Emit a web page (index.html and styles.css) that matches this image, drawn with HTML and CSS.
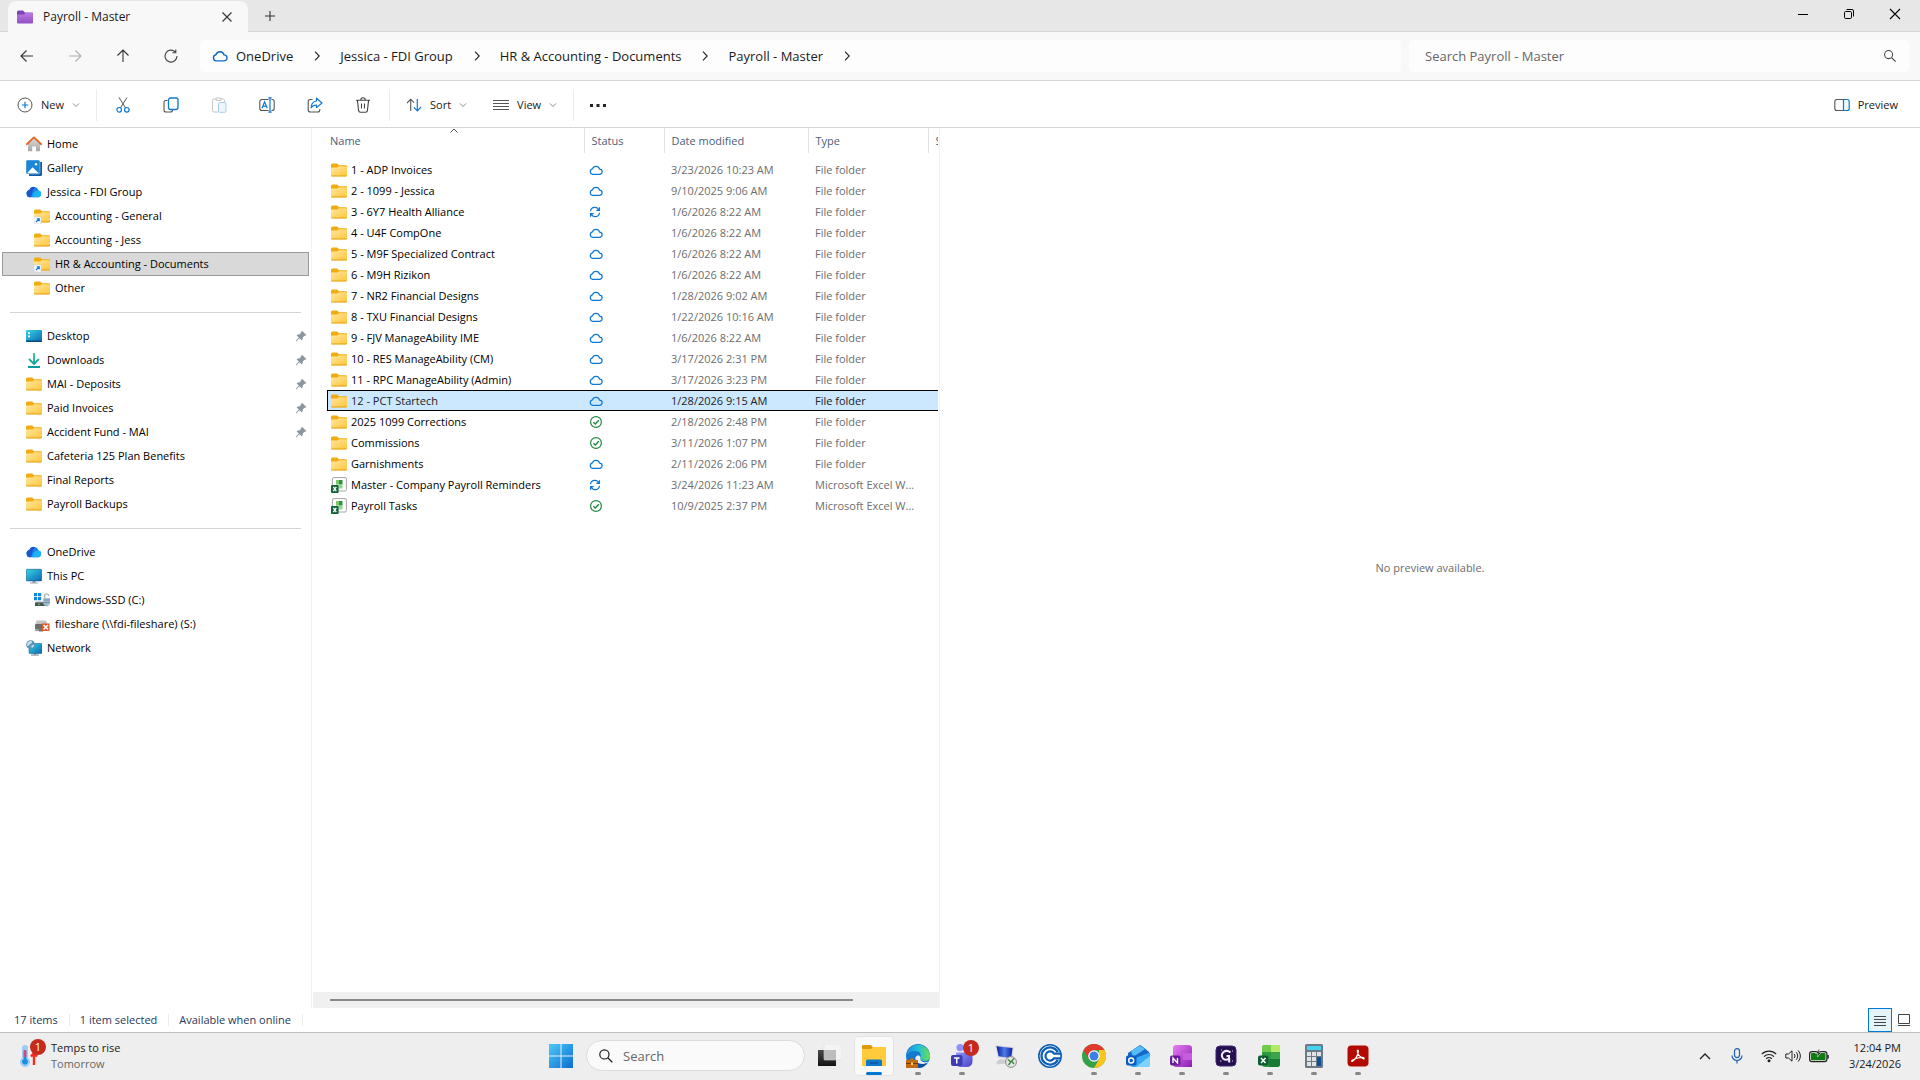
FILE: index.html
```html
<!DOCTYPE html>
<html lang="en">
<head>
<meta charset="utf-8">
<title>Payroll - Master</title>
<link rel="stylesheet" href="styles.css">
</head>
<body>
<svg class="sprite" aria-hidden="true">
  <defs>
    <linearGradient id="gFolder" x1="0" y1="0" x2="1" y2="1"><stop offset="0" stop-color="#ffe7a2"/><stop offset="1" stop-color="#ffc63a"/></linearGradient>
    <linearGradient id="gPurple" x1="0" y1="0" x2="0" y2="1"><stop offset="0" stop-color="#b97be0"/><stop offset="1" stop-color="#8f4fc4"/></linearGradient>
    <linearGradient id="gScreen" x1="0" y1="0" x2="1" y2="1"><stop offset="0" stop-color="#35d6e3"/><stop offset="1" stop-color="#0b66b5"/></linearGradient>
    <linearGradient id="gBlue" x1="0" y1="0" x2="1" y2="1"><stop offset="0" stop-color="#4cc8fb"/><stop offset="1" stop-color="#0a6ecf"/></linearGradient>
    <linearGradient id="gHouse" x1="0" y1="0" x2="0" y2="1"><stop offset="0" stop-color="#dcdcdc"/><stop offset="1" stop-color="#a4a4a4"/></linearGradient>
    <linearGradient id="gDown" x1="0" y1="0" x2="0" y2="1"><stop offset="0" stop-color="#2fc08f"/><stop offset="1" stop-color="#0c9aa0"/></linearGradient>
    <linearGradient id="gEdge" x1="0" y1="0" x2="1" y2="0"><stop offset="0" stop-color="#1b8fe0"/><stop offset=".5" stop-color="#22bfd6"/><stop offset="1" stop-color="#6be04f"/></linearGradient>
    <linearGradient id="gTeams" x1="0" y1="0" x2="1" y2="1"><stop offset="0" stop-color="#8f95ff"/><stop offset="1" stop-color="#4a45c4"/></linearGradient>
    <linearGradient id="gNote" x1="0" y1="0" x2="1" y2="1"><stop offset="0" stop-color="#e87ef5"/><stop offset="1" stop-color="#8a1fb0"/></linearGradient>
    <linearGradient id="gDark" x1="0" y1="0" x2="0" y2="1"><stop offset="0" stop-color="#4a4a4a"/><stop offset="1" stop-color="#141414"/></linearGradient>
    <linearGradient id="gRdp" x1="0" y1="0" x2="1" y2="0"><stop offset="0" stop-color="#0a1f9c"/><stop offset=".5" stop-color="#4f7ae8"/><stop offset="1" stop-color="#0c22a0"/></linearGradient>
  </defs>
  <symbol id="folder" viewBox="0 0 16 16"><path d="M0 3.2Q0 1.5 1.5 1.5H6.2L8 3.3H15Q16 3.3 16 4.3V6H0Z" fill="#f2ab0c"/><path d="M0 5.6H6.2L8 4.2H15.2Q16 4.2 16 5V13.2Q16 14.2 15 14.2H1Q0 14.2 0 13.2Z" fill="url(#gFolder)"/><path d="M0 13.5H16Q16 14.5 15 14.5H1Q0 14.5 0 13.5Z" fill="#e5a00d"/></symbol>
  <symbol id="folder-link" viewBox="0 0 16 16"><use href="#folder"/><path d="M0 9H7V16H0Z" fill="#fff" stroke="#c9d3dc" stroke-width=".7"/><path d="M2 14L5 11M2.8 10.8H5.2V13.2" fill="none" stroke="#1277cf" stroke-width="1.3"/></symbol>
  <symbol id="folder-purple" viewBox="0 0 16 16"><path d="M0 3Q0 1.5 1.5 1.5H6L8 3.5H15Q16 3.5 16 4.5V7H0Z" fill="#7b46b4"/><path d="M0 5.5H7L8.5 4H15Q16 4 16 5V13.5Q16 14.5 15 14.5H1Q0 14.5 0 13.5Z" fill="url(#gPurple)"/></symbol>
  <symbol id="home" viewBox="0 0 16 16"><path d="M2 7.5L8 2.2L14 7.5V14.5Q14 15.3 13.2 15.3H10V10.4H6.2V15.3H2.8Q2 15.3 2 14.5Z" fill="url(#gHouse)"/><path d="M.8 8.2L8 1.4L15.2 8.2" fill="none" stroke="#e0682a" stroke-width="1.9" stroke-linecap="round" stroke-linejoin="round"/></symbol>
  <symbol id="gallery" viewBox="0 0 16 16"><path d="M2 2H16V14.5Q16 16 14.5 16H3Z" fill="#1159a3"/><rect width="14" height="14" rx="1.5" fill="#1a86d6" stroke="#fff" stroke-width=".4"/><path d="M1 13.2L6.6 7.2L12.8 13.2Z" fill="#fff"/><circle cx="10" cy="4.2" r="1.2" fill="#fff"/></symbol>
  <symbol id="onedrive" viewBox="0 0 16 16"><path d="M4 13.3A3.8 3.8 0 0 1 3.2 5.9A5 5 0 0 1 12.4 6.2A3.7 3.7 0 0 1 12.6 13.3Z" fill="#1583ee"/><path d="M3.2 5.9A5 5 0 0 1 9.3 3.2Q6 6 5.2 12.9L4 13.3A3.8 3.8 0 0 1 3.2 5.9Z" fill="#1c55cd"/><path d="M6.3 13.3Q6.8 6.9 12.4 6.2A3.7 3.7 0 0 1 12.6 13.3Z" fill="#18b3fb"/></symbol>
  <symbol id="desktop" viewBox="0 0 16 16"><rect y="2" width="16" height="12" rx="1" fill="url(#gScreen)"/><path d="M0 12.4H16V13Q16 14 15 14H1Q0 14 0 13Z" fill="#084a7d"/><path d="M2 4.2H4V6H2ZM2 7.4H4V9.2H2Z" fill="#fff"/></symbol>
  <symbol id="downloads" viewBox="0 0 16 16"><path d="M8 1V11.5M3 7L8 12L13 7M2 15H14" fill="none" stroke="url(#gDown)" stroke-width="1.8"/></symbol>
  <symbol id="pc" viewBox="0 0 16 16"><path d="M6.5 12.5H9.5V14.4H12V15.6H4V14.4H6.5Z" fill="#9aa5ad"/><rect x=".3" y="1.3" width="15.4" height="11.6" rx="1" fill="url(#gScreen)" stroke="#0c5586" stroke-width=".6"/></symbol>
  <symbol id="ssd" viewBox="0 0 16 16"><path d="M0 1H3.2V4.2H0ZM4 1H7.2V4.2H4ZM0 5H3.2V8.2H0ZM4 5H7.2V8.2H4Z" fill="#1285dc"/><path d="M2 9.5H10L12 14H1Z" fill="#aeb4b8"/><rect x="1" y="10.5" width="11" height="3.5" fill="#4e5357"/><circle cx="5" cy="12.3" r=".9" fill="#42d35a"/><path d="M10.6 6V4A2.1 2.1 0 0 1 14.8 4" fill="none" stroke="#aab4bc" stroke-width="1.3"/><path d="M9.3 6H16V12.3L12.7 14.8L9.3 12.3Z" fill="#a2bccd"/><path d="M9.3 8H16M9.3 10.5H16" stroke="#648ba5" stroke-width=".8"/></symbol>
  <symbol id="netdrive" viewBox="0 0 16 16"><path d="M2.6 4.5H12L14 9H1Z" fill="#c2c2c2"/><rect x="1" y="8" width="13" height="5.5" rx="1" fill="#6d6d6d"/><path d="M5 13.5H9V15H5ZM1 14.2H14" fill="#555" stroke="#777" stroke-width="1"/><rect x="8" y="7.5" width="7.5" height="7.5" fill="#dc5a2b"/><path d="M9.6 9.1L14 13.4M14 9.1L9.6 13.4" stroke="#fff" stroke-width="1.4"/></symbol>
  <symbol id="network" viewBox="0 0 16 16"><path d="M7.5 13H10.5V14.6H13V15.8H5V14.6H7.5Z" fill="#9aa5ad"/><rect x="3" y="3.5" width="13" height="10" rx="1" fill="url(#gScreen)" stroke="#0c5586" stroke-width=".5"/><circle cx="4.6" cy="4.6" r="4.4" fill="#5b93b5"/><path d="M1.2 3Q4 0 6 1.6Q6.5 3.5 3.6 4.2Q2.6 6.6 1.2 5.8ZM5.4 5.4L8.2 4.6Q8 7.2 5.6 8Z" fill="#cfe0ea"/></symbol>
  <symbol id="pin" viewBox="0 0 12 12"><path d="M7 .8L11.3 5L10 5.9L9.5 5.7L7.6 7.7L7.7 9.3L6.6 10.3L4.4 8.2L1.2 11.4L.7 10.9L3.8 7.6L1.7 5.4L2.7 4.4L4.4 4.5L6.3 2.6L6.1 1.9Z" fill="#8b959e"/></symbol>
  <symbol id="cloud" viewBox="0 0 16 16"><path d="M4.2 12.9A3.1 3.1 0 0 1 3.9 6.8A4.2 4.2 0 0 1 12 6.9A3 3 0 0 1 12 12.9Z" fill="none" stroke="currentColor" stroke-width="1.4" stroke-linejoin="round"/></symbol>
  <symbol id="sync" viewBox="0 0 14 14"><path d="M1.8 6.2A5 5 0 0 1 11.4 4.6M12.2 1.6V5.2H8.6M12.2 7.8A5 5 0 0 1 2.6 9.4M1.8 12.4V8.8H5.4" fill="none" stroke="currentColor" stroke-width="1.4"/></symbol>
  <symbol id="check" viewBox="0 0 14 14"><circle cx="7" cy="7" r="5.4" fill="none" stroke="currentColor" stroke-width="1.2"/><path d="M4.4 7.2L6.3 9L9.8 5.2" fill="none" stroke="currentColor" stroke-width="1.4"/></symbol>
  <symbol id="xlfile" viewBox="0 0 16 16"><path d="M3 .6H14Q15.4 .6 15.4 2V12.6Q15.4 14 14 14H3Q1.400 14 1.400 12.600V2Q1.400 .6 3 .6Z" fill="#fff" stroke="#9b9b9b" stroke-width=".9"/><path d="M5 3H8V7.600H5Z" fill="#7dc96a"/><path d="M8 3H11.500V7.600H8Z" fill="#2f9144"/><path d="M7.500 7.600H11.500V11.500H7.500Z" fill="#8fd98a"/><rect y="8" width="7.600" height="8" rx="1" fill="#136238"/><path d="M2.300 9.800L5.300 14.200M5.300 9.800L2.300 14.200" stroke="#fff" stroke-width="1.3"/></symbol>
  <symbol id="chev-right" viewBox="0 0 12 12"><path d="M4 1.6L8.2 6L4 10.4" fill="none" stroke="currentColor" stroke-width="1.1"/></symbol>
  <symbol id="chev-down" viewBox="0 0 8 8"><path d="M1 2.5L4 5.5L7 2.5" fill="none" stroke="#8a8a8a" stroke-width="1"/></symbol>
  <symbol id="search" viewBox="0 0 16 16"><circle cx="6.4" cy="6.4" r="4.6" fill="none" stroke="currentColor" stroke-width="1.2"/><path d="M9.8 9.8L14.4 14.4" stroke="currentColor" stroke-width="1.3"/></symbol>
</svg>

<header class="titlebar">
  <div class="tab">
    <svg class="i16"><use href="#folder-purple"/></svg>
    <span class="tab-name">Payroll - Master</span>
    <button class="icon-btn tab-close" aria-label="Close tab"><svg class="i16" viewBox="0 0 16 16"><path d="M3.5 3.5L12.5 12.5M12.5 3.5L3.5 12.5" stroke="#333" stroke-width="1.1"/></svg></button>
  </div>
  <button class="icon-btn new-tab" aria-label="New tab"><svg class="i16" viewBox="0 0 16 16"><path d="M8 3V13M3 8H13" stroke="#333" stroke-width="1.1"/></svg></button>
  <div class="window-controls">
    <button class="icon-btn" aria-label="Minimize"><svg class="i16" viewBox="0 0 16 16"><path d="M3 8.5H13" stroke="#000"/></svg></button>
    <button class="icon-btn" aria-label="Restore"><svg class="i16" viewBox="0 0 16 16"><rect x="3.5" y="5.5" width="7" height="7" rx="1.2" fill="none" stroke="#000"/><path d="M5.5 3.5H11Q12.5 3.5 12.5 5V10.5" fill="none" stroke="#000"/></svg></button>
    <button class="icon-btn" aria-label="Close"><svg class="i16" viewBox="0 0 16 16"><path d="M3 3L13 13M13 3L3 13" stroke="#000" stroke-width="1.1"/></svg></button>
  </div>
</header>

<div class="navbar">
  <div class="nav-buttons">
    <button class="icon-btn" aria-label="Back"><svg class="i16" viewBox="0 0 16 16"><path d="M2 8H14M7.5 2.5L2 8L7.5 13.5" fill="none" stroke="#333" stroke-width="1.1"/></svg></button>
    <button class="icon-btn" aria-label="Forward" disabled><svg class="i16" viewBox="0 0 16 16"><path d="M2 8H14M8.5 2.5L14 8L8.5 13.5" fill="none" stroke="#b0b0b0" stroke-width="1.1"/></svg></button>
    <button class="icon-btn" aria-label="Up"><svg class="i16" viewBox="0 0 16 16"><path d="M8 14V2M2.5 7.5L8 2L13.5 7.5" fill="none" stroke="#333" stroke-width="1.1"/></svg></button>
    <button class="icon-btn" aria-label="Refresh"><svg class="i16" viewBox="0 0 16 16"><path d="M12.2 3.8A6 6 0 1 0 14 8M12.8 1.6V4.8H9.4" fill="none" stroke="#444" stroke-width="1.1"/></svg></button>
  </div>
  <nav class="address" aria-label="Address">
    <svg class="i16 address-cloud"><use href="#cloud"/></svg>
    <a href="#">OneDrive</a><svg class="i12"><use href="#chev-right"/></svg>
    <a href="#">Jessica - FDI Group</a><svg class="i12"><use href="#chev-right"/></svg>
    <a href="#">HR &amp; Accounting - Documents</a><svg class="i12"><use href="#chev-right"/></svg>
    <a href="#">Payroll - Master</a><svg class="i12"><use href="#chev-right"/></svg>
  </nav>
  <label class="find">
    <input type="text" placeholder="Search Payroll - Master" aria-label="Search Payroll - Master">
    <svg class="i14"><use href="#search"/></svg>
  </label>
</div>

<div class="commands">
  <div class="group">
    <button class="cmd"><svg class="i16" viewBox="0 0 16 16"><circle cx="8" cy="8" r="7" fill="none" stroke="#555"/><path d="M8 4.8V11.2M4.8 8H11.2" stroke="#0f78d4" stroke-width="1.2"/></svg>New<svg class="i8"><use href="#chev-down"/></svg></button>
  </div>
  <div class="group tools">
    <button class="icon-btn" aria-label="Cut"><svg class="i16" viewBox="0 0 16 16"><path d="M4 .5L10.6 11M12 .5L5.4 11" stroke="#555" fill="none"/><circle cx="4.2" cy="12.8" r="2.3" fill="none" stroke="#0f78d4" stroke-width="1.2"/><circle cx="11.8" cy="12.8" r="2.3" fill="none" stroke="#0f78d4" stroke-width="1.2"/></svg></button>
    <button class="icon-btn" aria-label="Copy"><svg class="i16" viewBox="0 0 16 16"><path d="M4.5 3.5H3Q1 3.5 1 5.5V13Q1 15 3 15H7.5Q9.5 15 9.5 13" fill="none" stroke="#555" stroke-width="1.1"/><rect x="5.5" y="1" width="9.5" height="11.5" rx="2" fill="#fff" stroke="#0f78d4" stroke-width="1.3"/></svg></button>
    <button class="icon-btn" aria-label="Paste" disabled><svg class="i16" viewBox="0 0 16 16"><path d="M5 2H3Q1.5 2 1.5 3.5V13.5Q1.5 15 3 15H7M10 2H12Q13.5 2 13.5 3.5V5M5 1H10V3.4H5Z" fill="none" stroke="#c4c4c4"/><rect x="7.5" y="5.5" width="7.5" height="9.8" rx="1.2" fill="#eef6fc" stroke="#a5cdee"/></svg></button>
    <button class="icon-btn" aria-label="Rename"><svg class="i16" viewBox="0 0 16 16"><path d="M9.5 2.5H3Q.8 2.5 .8 4.5V11.5Q.8 13.5 3 13.5H9.5M12.5 2.5H13.2Q15.2 2.5 15.2 4.5V11.5Q15.2 13.5 13.2 13.5H12.5" fill="none" stroke="#555" stroke-width="1.1"/><path d="M3 11.2L5.6 4.8L8.2 11.2M3.9 9.2H7.3M11 .8V15.2M9.3 .8H12.7M9.3 15.2H12.7" fill="none" stroke="#0f78d4" stroke-width="1.2"/></svg></button>
    <button class="icon-btn" aria-label="Share"><svg class="i16" viewBox="0 0 16 16"><path d="M5.5 2.5H3.5Q1.2 2.5 1.2 4.5V13Q1.2 15 3.5 15H10.5Q12.8 15 12.8 13V12" fill="none" stroke="#555" stroke-width="1.1"/><path d="M9.5 1.2L15 6L9.5 10.6V8Q6 7.8 4.2 10.8Q4.4 4.6 9.5 4Z" fill="none" stroke="#0f78d4" stroke-width="1.2" stroke-linejoin="round"/></svg></button>
    <button class="icon-btn" aria-label="Delete"><svg class="i16" viewBox="0 0 16 16"><path d="M1 3.2H15M5.8 3A2.2 2.2 0 0 1 10.2 3M2.4 3.4L3.6 13.6Q3.8 15.2 5.4 15.2H10.6Q12.2 15.2 12.4 13.6L13.6 3.4M6.5 6.5V11.5M9.5 6.5V11.5" fill="none" stroke="#444" stroke-width="1.1"/></svg></button>
  </div>
  <div class="group views">
    <button class="cmd"><svg class="i16" viewBox="0 0 16 16"><path d="M4.7 14V2.2M1 6L4.7 2.2L8 5.6" fill="none" stroke="#555" stroke-width="1.1"/><path d="M11.3 2V13.8M8 10.4L11.3 13.8L15 10" fill="none" stroke="#0f78d4" stroke-width="1.2"/></svg>Sort<svg class="i8"><use href="#chev-down"/></svg></button>
    <button class="cmd"><svg class="i16" viewBox="0 0 16 16"><path d="M0 3.5H16M0 6.5H16M0 9.5H16M0 12.5H16" stroke="#555"/></svg>View<svg class="i8"><use href="#chev-down"/></svg></button>
  </div>
  <button class="icon-btn more" aria-label="See more"><svg class="i16" viewBox="0 0 16 16"><path d="M0 7H3V10H0ZM6.5 7H9.5V10H6.5ZM13 7H16V10H13Z" fill="#222"/></svg></button>
  <button class="cmd preview-toggle"><svg class="i16" viewBox="0 0 16 16"><path d="M9.5 2.5H3Q.8 2.5 .8 4.5V11.5Q.8 13.5 3 13.5H9.5" fill="none" stroke="#555" stroke-width="1.1"/><path d="M9.5 2.5H13.2Q15.2 2.5 15.2 4.5V11.5Q15.2 13.5 13.2 13.5H9.5Z" fill="#f2f9ff" stroke="#0f78d4" stroke-width="1.2"/></svg>Preview</button>
</div>

<main class="panes">
  <nav class="tree" aria-label="Folders">
    <ul>
      <li><a href="#"><svg class="i16"><use href="#home"/></svg>Home</a></li>
      <li><a href="#"><svg class="i16"><use href="#gallery"/></svg>Gallery</a></li>
      <li><a href="#"><svg class="i16"><use href="#onedrive"/></svg>Jessica - FDI Group</a></li>
      <li><a class="sub" href="#"><svg class="i16"><use href="#folder-link"/></svg>Accounting - General</a></li>
      <li><a class="sub" href="#"><svg class="i16"><use href="#folder"/></svg>Accounting - Jess</a></li>
      <li><a class="sub current" href="#"><svg class="i16"><use href="#folder-link"/></svg>HR &amp; Accounting - Documents</a></li>
      <li><a class="sub" href="#"><svg class="i16"><use href="#folder"/></svg>Other</a></li>
    </ul>
    <ul>
      <li><a href="#"><svg class="i16"><use href="#desktop"/></svg>Desktop<svg class="i12 pin"><use href="#pin"/></svg></a></li>
      <li><a href="#"><svg class="i16"><use href="#downloads"/></svg>Downloads<svg class="i12 pin"><use href="#pin"/></svg></a></li>
      <li><a href="#"><svg class="i16"><use href="#folder"/></svg>MAI - Deposits<svg class="i12 pin"><use href="#pin"/></svg></a></li>
      <li><a href="#"><svg class="i16"><use href="#folder"/></svg>Paid Invoices<svg class="i12 pin"><use href="#pin"/></svg></a></li>
      <li><a href="#"><svg class="i16"><use href="#folder"/></svg>Accident Fund - MAI<svg class="i12 pin"><use href="#pin"/></svg></a></li>
      <li><a href="#"><svg class="i16"><use href="#folder"/></svg>Cafeteria 125 Plan Benefits</a></li>
      <li><a href="#"><svg class="i16"><use href="#folder"/></svg>Final Reports</a></li>
      <li><a href="#"><svg class="i16"><use href="#folder"/></svg>Payroll Backups</a></li>
    </ul>
    <ul>
      <li><a href="#"><svg class="i16"><use href="#onedrive"/></svg>OneDrive</a></li>
      <li><a href="#"><svg class="i16"><use href="#pc"/></svg>This PC</a></li>
      <li><a class="sub" href="#"><svg class="i16"><use href="#ssd"/></svg>Windows-SSD (C:)</a></li>
      <li><a class="sub" href="#"><svg class="i16"><use href="#netdrive"/></svg>fileshare (\\fdi-fileshare) (S:)</a></li>
      <li><a href="#"><svg class="i16"><use href="#network"/></svg>Network</a></li>
    </ul>
  </nav>

  <section class="files">
    <div class="files-view">
    <table>
      <colgroup><col class="c-name"><col class="c-status"><col class="c-date"><col class="c-type"><col class="c-size"></colgroup>
      <thead>
        <tr><th>Name<svg class="sort-mark" viewBox="0 0 8 5"><path d="M.5 4.5L4 1L7.5 4.5" fill="none" stroke="#555"/></svg></th><th>Status</th><th>Date modified</th><th>Type</th><th>Size</th></tr>
      </thead>
      <tbody>
        <tr><td><svg class="i16"><use href="#folder"/></svg>1 - ADP Invoices</td><td><svg class="i14 online"><use href="#cloud"/></svg></td><td>3/23/2026 10:23 AM</td><td>File folder</td><td></td></tr>
        <tr><td><svg class="i16"><use href="#folder"/></svg>2 - 1099 - Jessica</td><td><svg class="i14 online"><use href="#cloud"/></svg></td><td>9/10/2025 9:06 AM</td><td>File folder</td><td></td></tr>
        <tr><td><svg class="i16"><use href="#folder"/></svg>3 - 6Y7 Health Alliance</td><td><svg class="i12 online"><use href="#sync"/></svg></td><td>1/6/2026 8:22 AM</td><td>File folder</td><td></td></tr>
        <tr><td><svg class="i16"><use href="#folder"/></svg>4 - U4F CompOne</td><td><svg class="i14 online"><use href="#cloud"/></svg></td><td>1/6/2026 8:22 AM</td><td>File folder</td><td></td></tr>
        <tr><td><svg class="i16"><use href="#folder"/></svg>5 - M9F Specialized Contract</td><td><svg class="i14 online"><use href="#cloud"/></svg></td><td>1/6/2026 8:22 AM</td><td>File folder</td><td></td></tr>
        <tr><td><svg class="i16"><use href="#folder"/></svg>6 - M9H Rizikon</td><td><svg class="i14 online"><use href="#cloud"/></svg></td><td>1/6/2026 8:22 AM</td><td>File folder</td><td></td></tr>
        <tr><td><svg class="i16"><use href="#folder"/></svg>7 - NR2 Financial Designs</td><td><svg class="i14 online"><use href="#cloud"/></svg></td><td>1/28/2026 9:02 AM</td><td>File folder</td><td></td></tr>
        <tr><td><svg class="i16"><use href="#folder"/></svg>8 - TXU Financial Designs</td><td><svg class="i14 online"><use href="#cloud"/></svg></td><td>1/22/2026 10:16 AM</td><td>File folder</td><td></td></tr>
        <tr><td><svg class="i16"><use href="#folder"/></svg>9 - FJV ManageAbility IME</td><td><svg class="i14 online"><use href="#cloud"/></svg></td><td>1/6/2026 8:22 AM</td><td>File folder</td><td></td></tr>
        <tr><td><svg class="i16"><use href="#folder"/></svg>10 - RES ManageAbility (CM)</td><td><svg class="i14 online"><use href="#cloud"/></svg></td><td>3/17/2026 2:31 PM</td><td>File folder</td><td></td></tr>
        <tr><td><svg class="i16"><use href="#folder"/></svg>11 - RPC ManageAbility (Admin)</td><td><svg class="i14 online"><use href="#cloud"/></svg></td><td>3/17/2026 3:23 PM</td><td>File folder</td><td></td></tr>
        <tr class="selected"><td><svg class="i16"><use href="#folder"/></svg>12 - PCT Startech</td><td><svg class="i14 online"><use href="#cloud"/></svg></td><td>1/28/2026 9:15 AM</td><td>File folder</td><td></td></tr>
        <tr><td><svg class="i16"><use href="#folder"/></svg>2025 1099 Corrections</td><td><svg class="i14 local"><use href="#check"/></svg></td><td>2/18/2026 2:48 PM</td><td>File folder</td><td></td></tr>
        <tr><td><svg class="i16"><use href="#folder"/></svg>Commissions</td><td><svg class="i14 local"><use href="#check"/></svg></td><td>3/11/2026 1:07 PM</td><td>File folder</td><td></td></tr>
        <tr><td><svg class="i16"><use href="#folder"/></svg>Garnishments</td><td><svg class="i14 online"><use href="#cloud"/></svg></td><td>2/11/2026 2:06 PM</td><td>File folder</td><td></td></tr>
        <tr><td><svg class="i16"><use href="#xlfile"/></svg>Master - Company Payroll Reminders</td><td><svg class="i12 online"><use href="#sync"/></svg></td><td>3/24/2026 11:23 AM</td><td>Microsoft Excel W...</td><td></td></tr>
        <tr><td><svg class="i16"><use href="#xlfile"/></svg>Payroll Tasks</td><td><svg class="i14 local"><use href="#check"/></svg></td><td>10/9/2025 2:37 PM</td><td>Microsoft Excel W...</td><td></td></tr>
      </tbody>
    </table>
    </div>
    <div class="scrollbar"><div class="thumb"></div></div>
  </section>

  <section class="preview"><p>No preview available.</p></section>
</main>

<footer class="statusbar">
  <span>17 items</span><span>1 item selected</span><span>Available when online</span>
  <div class="view-modes">
    <button class="mode on" aria-label="Details view"><svg class="i16" viewBox="0 0 16 16"><path d="M2 4.5H14M2 7.5H14M2 10.5H14M2 13.5H14" stroke="#444"/></svg></button>
    <button class="mode" aria-label="Large icons"><svg class="i16" viewBox="0 0 16 16"><path d="M2.5 2.5H13.5V11.5H2.5ZM2 13.5H14" fill="none" stroke="#444"/></svg></button>
  </div>
</footer>

<footer class="taskbar">
  <button class="weather">
    <span class="weather-icon"><svg class="i24" viewBox="0 0 24 24"><path d="M4 4A3 3 0 0 1 10 4V14A5 5 0 1 1 4 14Z" fill="#9ccdf2"/><path d="M5.7 7H8.3V15A3 3 0 1 1 5.7 15Z" fill="#1c8fe0"/><path d="M5.7 6H8.3V13H5.7Z" fill="#d6457c"/><path d="M16 9V21M13 12.5L16 9L19 12.5" fill="none" stroke="#f8291d" stroke-width="2.4"/></svg><span class="badge">1</span></span>
    <span class="weather-text"><span>Temps to rise</span><span class="muted">Tomorrow</span></span>
  </button>
  <div class="apps">
    <button class="app" aria-label="Start"><svg class="i24" viewBox="0 0 24 24"><path d="M0 0H11.5V11.5H0ZM12.5 0H24V11.5H12.5ZM0 12.5H11.5V24H0ZM12.5 12.5H24V24H12.5Z" fill="url(#gBlue)"/></svg></button>
    <label class="task-search"><svg class="i16"><use href="#search"/></svg><input type="text" placeholder="Search" aria-label="Search"></label>
    <button class="app" aria-label="Task view"><svg class="i24" viewBox="0 0 24 24"><rect y="6" width="18" height="16" fill="url(#gDark)"/><rect x="6" width="18" height="16" rx="1" fill="#f4f4f4" stroke="#ddd" stroke-width=".6"/><rect x="6" y="6" width="12" height="10" fill="#bdbdbd"/></svg></button>
    <button class="app active" aria-label="File Explorer"><svg class="i24" viewBox="0 0 24 24"><path d="M0 2Q0 1 1 1H9L11 3.5H24V8H0Z" fill="#dd9a06"/><path d="M0 5H9L11 3H23Q24 3 24 4V22H0Z" fill="#ffcb3d"/><path d="M4 22V17Q4 15.5 5.5 15.5H18.500Q20 15.500 20 17V22Z" fill="#1278cc"/><path d="M8 19H16" stroke="#0b5798" stroke-width="1.4"/></svg></button>
    <button class="app run" aria-label="Edge"><svg class="i24" viewBox="0 0 24 24"><circle cx="12" cy="12" r="12" fill="#1479cf"/><path d="M.4 10A12 12 0 0 1 24 11.5Q24 17 18.500 17Q14 17 14.500 14Q16 7 9 7Q3 7 .4 12Z" fill="url(#gEdge)"/><path d="M9 14Q9 22 19 19.500Q23 18.500 22.800 17.500Q20 19 16.500 17.800Q13.500 16.500 14.600 13.200Q12 9 9 14Z" fill="#eee"/><path d="M9 13Q9 22 21 19.500Q17 24 12 24Q7 22 9 13Z" fill="#0c4f9c"/><path d="M4 16V14.500H8V16H12V24H0V16Z" fill="#c26a11"/><path d="M0 19.500H12" stroke="#733a05"/><path d="M5 18.500H7V21H5Z" fill="#ffd160"/></svg></button>
    <button class="app run" aria-label="Teams"><svg class="i24" viewBox="0 0 24 24"><circle cx="10" cy="3.600" r="3.600" fill="#8e92f5"/><path d="M6 8.500H22.500V17Q22.500 23 16 23H11Q6 23 6 18Z" fill="url(#gTeams)"/><rect x="1" y="11" width="11.500" height="11" rx="2" fill="#3d3cb0"/><path d="M4 14H9.500M6.750 14V19.500" stroke="#fff" stroke-width="1.500"/></svg><span class="badge">1</span></button>
    <button class="app" aria-label="Remote Desktop"><svg class="i24" viewBox="0 0 24 24"><path d="M1 1L20 3L18.500 16L3.500 13.500Z" fill="#d9dbe0"/><path d="M2.500 2.300L18.500 4L17.200 14.300L4.600 12.200Z" fill="url(#gRdp)"/><path d="M6 15L13 16L15 19L3 20.500Q1 18 6 15Z" fill="#cfcfd3"/><circle cx="17" cy="18" r="5.400" fill="#e7e7e7" stroke="#8a8a8a"/><path d="M14 15.500L16.800 18L14.500 21M20 14.500L17.600 17L20 20" fill="none" stroke="#3b8a3b" stroke-width="1.400"/></svg></button>
    <button class="app" aria-label="Connect"><svg class="i24" viewBox="0 0 24 24"><circle cx="12" cy="12" r="11.200" fill="#fff" stroke="#0c5fb3" stroke-width="1.600"/><path d="M19.800 8.200A8.600 8.600 0 1 0 19.800 15.800" fill="none" stroke="#0c5fb3" stroke-width="2.200"/><path d="M22.500 9.600H16A4.600 4.600 0 1 0 16 14.400H22.500" fill="none" stroke="#0c5fb3" stroke-width="2.200"/></svg></button>
    <button class="app run" aria-label="Chrome"><svg class="i24" viewBox="0 0 24 24"><circle cx="12" cy="12" r="12" fill="#34a148"/><path d="M1.600 6A12 12 0 0 1 22.400 6H12L7 15Z" fill="#e1392c"/><path d="M22.400 6A12 12 0 0 1 12 24L17.200 15L17 6Z" fill="#fbc61b"/><circle cx="12" cy="12" r="5.800" fill="#fff"/><circle cx="12" cy="12" r="4.500" fill="#3b7ee6"/></svg></button>
    <button class="app run" aria-label="Outlook"><svg class="i24" viewBox="0 0 24 24"><path d="M2 9L14 1Q15 1 23 8V12L10 19L2 15Z" fill="#1767c9"/><path d="M5 7L14 1.500L19 5L7 13Z" fill="#54bdf5"/><path d="M4 16L24 8.500V20Q24 23 21 23H7Q4 23 4 20Z" fill="#35a8f2"/><path d="M10 23L24 12V20Q24 23 21 23Z" fill="#7fd2fb"/><rect y="11.500" width="10.500" height="10" rx="2" fill="#0c5bbd"/><circle cx="5.200" cy="16.500" r="2.500" fill="none" stroke="#fff" stroke-width="1.400"/></svg></button>
    <button class="app run" aria-label="OneNote"><svg class="i24" viewBox="0 0 24 24"><path d="M3 4Q3 1 6 1H18Q22 1 22 4V23H6Q3 23 3 20Z" fill="url(#gNote)"/><path d="M13 9H22V16H13Z" fill="#c85ae0"/><rect y="11.500" width="10.500" height="10" rx="2" fill="#6b1a9c"/><path d="M3 19V14L7.500 19V14" fill="none" stroke="#fff" stroke-width="1.400"/></svg></button>
    <button class="app run" aria-label="G Assistant"><svg class="i24" viewBox="0 0 24 24"><rect x="2" y="2" width="20" height="20" rx="4" fill="#24104f" stroke="#3c2274"/><path d="M16.500 8.500Q13 5.500 9.500 8Q6.500 11 9 14.500Q12 17 15 14.500V12H12.500M15.200 14V18.500" fill="none" stroke="#f3ecff" stroke-width="2"/><path d="M6 17H7.500M7 6H8M18 7H19M18 17H19" stroke="#d9c8ff"/></svg></button>
    <button class="app run" aria-label="Excel"><svg class="i24" viewBox="0 0 24 24"><path d="M4 4Q4 1 7 1H22V20Q22 23 19 23H7Q4 23 4 20Z" fill="#2c9a42"/><path d="M13 1H22V8H13Z" fill="#b4e865"/><path d="M4 4Q4 1 7 1H13V8H4Z" fill="#6ecb4c"/><path d="M13 8H22V15H13Z" fill="#3aa548"/><path d="M11 15H22V20Q22 23 19 23H11Z" fill="#197a35"/><rect y="11.500" width="10.500" height="10" rx="2" fill="#0f5c33"/><path d="M3 14L7.500 19M7.500 14L3 19" stroke="#fff" stroke-width="1.500"/></svg></button>
    <button class="app run" aria-label="Calculator"><svg class="i24" viewBox="0 0 24 24"><rect x="3" width="18" height="24" rx="1.500" fill="#6d7a86"/><rect x="5" y="2" width="14" height="4" fill="#45d2f2"/><path d="M5 8H9V12H5ZM10 8H14V12H10ZM15 8H19V12H15ZM5 13H9V17H5ZM10 13H14V17H10ZM5 18H9V22H5ZM10 18H14V22H10Z" fill="#dfe3e6"/><rect x="15" y="13" width="4" height="9" fill="#0c4f94"/></svg></button>
    <button class="app run" aria-label="Acrobat"><svg class="i24" viewBox="0 0 24 24"><rect x="1.500" y="1.500" width="21" height="21" rx="4" fill="#b30b00"/><path d="M6 17.500Q11.500 14 12.300 7.500Q12.200 5.500 11.400 6.600Q11 11.500 17.800 15Q19 13.200 15.500 13.400Q10 13.800 6.300 16.200Q5.300 17.200 6 17.500Z" fill="none" stroke="#fff" stroke-width="1.300"/></svg></button>
  </div>
  <div class="tray">
    <button class="icon-btn" aria-label="Hidden icons"><svg class="i16" viewBox="0 0 16 16"><path d="M3 11L8 6L13 11" fill="none" stroke="#222" stroke-width="1.400"/></svg></button>
    <button class="icon-btn" aria-label="Microphone"><svg class="i16" viewBox="0 0 16 16"><rect x="5.500" y=".6" width="5" height="9" rx="2.500" fill="none" stroke="#1f5fae" stroke-width="1.200"/><path d="M3 7.500A5 5 0 0 0 13 7.500M8 12.500V15.500" fill="none" stroke="#1f5fae" stroke-width="1.200"/></svg></button>
    <button class="quick" aria-label="Network, volume, battery">
      <svg class="i16" viewBox="0 0 16 16"><path d="M.8 6.200A10 10 0 0 1 15.200 6.200M3 8.600A7 7 0 0 1 13 8.600M5.200 10.800A4 4 0 0 1 10.800 10.800" fill="none" stroke="#222" stroke-width="1.200"/><circle cx="8" cy="12.800" r="1.500" fill="#222"/></svg>
      <svg class="i16" viewBox="0 0 16 16"><path d="M.8 6H3.500L7 2.800V13.200L3.500 10H.8ZM9.200 6A3 3 0 0 1 9.200 10M11.200 4.200A5.500 5.500 0 0 1 11.200 11.800M13.200 2.500A8 8 0 0 1 13.200 13.500" fill="none" stroke="#222"/></svg>
      <svg class="battery" viewBox="0 0 20 16"><rect x=".6" y="3.600" width="17.300" height="10" rx="2.400" fill="none" stroke="#222" stroke-width="1.200"/><rect x="2" y="5" width="14.500" height="7.200" rx="1" fill="#107c10"/><path d="M19 7V10.500" stroke="#222" stroke-width="1.600"/><path d="M10.500 .5L6.500 5.500H9L8.500 9L12.500 4.200H9.800Z" fill="#222" stroke="#eee" stroke-width=".6"/></svg>
    </button>
    <div class="clock"><span>12:04 PM</span><span>3/24/2026</span></div>
  </div>
</footer>
</body>
</html>
```
FILE: styles.css
```css
* { box-sizing: border-box; }

body {
  margin: 0;
  min-height: 100vh;
  display: flex;
  flex-direction: column;
  background: #fff;
  color: #1a1a1a;
  font: 12px/16px "Open Sans", "Noto Sans", sans-serif;
}

button, input { font: inherit; color: inherit; border: 0; background: none; padding: 0; margin: 0; }
input:focus { outline: none; }
a { color: inherit; text-decoration: none; }
ul { list-style: none; margin: 0; padding: 0; }
svg { flex: none; display: block; }

.sprite { position: absolute; width: 0; height: 0; }
.i8 { width: 8px; height: 8px; }
.i12 { width: 12px; height: 12px; }
.i14 { width: 14px; height: 14px; }
.i16 { width: 16px; height: 16px; }
.i24 { width: 24px; height: 24px; }

.icon-btn { display: flex; align-items: center; justify-content: center; width: 32px; height: 32px; }

/* Title bar */
.titlebar { display: flex; height: 32px; padding: 0 2px 0 8px; background: #e7e7e7; box-shadow: inset 0 -1px #d6d6d6; }
.tab { display: flex; align-items: center; width: 240px; margin-top: 1px; padding-left: 9px; gap: 10px; background: #f8f8f8; border-radius: 8px 8px 0 0; }
.tab-close { margin-left: auto; margin-right: 5px; }
.new-tab { margin-left: 6px; }
.window-controls { display: flex; margin-left: auto; height: 28px; }
.window-controls .icon-btn { width: 46px; height: 28px; }

/* Address row */
.navbar { display: flex; align-items: center; gap: 8px; height: 49px; padding: 0 11px; background: #f8f8f8; border-bottom: 1px solid #d6d6d6; }
.nav-buttons { display: flex; gap: 16px; width: 181px; }
.address { display: flex; align-items: center; flex: 1; height: 32px; padding-left: 12px; background: #fdfdfd; border-radius: 5px; font-size: 13px; }
.address .i12 { margin: 0 17px 0 18px; color: #222; }
.address-cloud { margin-right: 8px; color: #0f6cbd; }
.find { display: flex; align-items: center; width: 500px; height: 32px; padding: 0 12px 0 16px; background: #fdfdfd; border-radius: 5px; font-size: 13px; color: #444; }
.find input { flex: 1; }
input::placeholder { color: #666; opacity: 1; }

/* Command bar */
.commands { display: flex; align-items: center; height: 47px; padding: 2px 22px 0 17px; border-bottom: 1px solid #d6d6d6; font-size: 11px; }
.group { display: flex; align-items: center; height: 32px; border-right: 1px solid #ececec; }
.cmd { display: flex; align-items: center; gap: 8px; height: 32px; }
.commands .group:first-child { width: 80px; }
.tools { gap: 16px; width: 293px; padding-left: 10px; }
.views { gap: 26px; width: 184px; padding-left: 16px; }
.more { margin-left: 8px; }
.preview-toggle { margin-left: auto; }

/* Panes */
.panes { display: grid; grid-template-columns: 312px 628px 1fr; flex: 1; }
.tree { padding-top: 4px; border-right: 1px solid #f2f2f2; color: #000; font-size: 11px; }
.tree ul + ul { margin-top: 12px; padding-top: 12px; position: relative; }
.tree ul + ul::before { content: ""; position: absolute; top: 0; left: 10px; right: 10px; height: 1px; background: #d4d4d4; }
.tree a { display: flex; align-items: center; gap: 5px; height: 24px; margin: 0 2px; padding-left: 24px; }
.tree a.sub { padding-left: 32px; }
.tree a.current { background: #d9d9d9; box-shadow: inset 0 0 0 1px #999; }
.pin { margin-left: auto; margin-right: 2px; }

.files { display: flex; flex-direction: column; min-width: 0; border-right: 1px solid #f2f2f2; font-size: 11px; }
.files-view { flex: 1; overflow: hidden; padding-left: 15px; margin-right: 1px; }
.files table { table-layout: fixed; width: 700px; border-collapse: collapse; }
.c-name { width: 257px; }
.c-status { width: 80px; }
.c-date { width: 144px; }
.c-type { width: 120px; }
.c-size { width: 99px; }
.files th { position: relative; height: 25px; padding: 0 0 0 7px; border-right: 1px solid #e2e2e2; text-align: left; font-weight: 400; color: #4c607a; }
.files th:first-child { padding-left: 3px; }
.sort-mark { position: absolute; top: 0; left: 123px; width: 8px; height: 5px; }
.files tbody::before { content: ""; display: table-row; height: 6px; }
.files td { height: 21px; padding: 0 0 0 7px; color: #6d6d6d; white-space: nowrap; }
.files td:nth-child(2) { padding-left: 5px; }
.files td:first-child { display: flex; align-items: center; gap: 4px; padding-left: 4px; color: #000; }
.files .selected td { background: #cce8ff; color: #222; box-shadow: inset 0 1px #000, inset 0 -1px #000; }
.files .selected td:first-child { box-shadow: inset 0 1px #000, inset 0 -1px #000, inset 1px 0 #000; }
.online { color: #0f78d4; }
.local { color: #1e8a3c; }
.scrollbar { display: flex; align-items: center; height: 16px; margin-left: 1px; padding: 0 86px 0 17px; background: #f0f0f0; }
.thumb { flex: 1; height: 2px; background: #888; }

.preview { display: grid; place-items: center; font-size: 11px; color: #6d6d6d; }
.preview p { margin: 0; }

/* Status bar */
.statusbar { display: flex; align-items: center; height: 24px; padding: 0 4px; font-size: 11px; color: #1e395b; }
.statusbar > span { line-height: 12px; padding: 0 11px 0 10px; border-right: 1px solid #ececec; }
.view-modes { display: flex; margin-left: auto; }
.mode { display: grid; place-items: center; width: 24px; height: 24px; }
.mode.on { background: #e5f3fb; box-shadow: inset 0 0 0 1px #0078d7; }

/* Taskbar */
.taskbar { display: grid; grid-template-columns: 1fr auto 1fr; align-items: center; height: 48px; padding: 0 19px 2px 18px; background: #eee; border-top: 1px solid #bfbfbf; font-size: 11px; }
.weather { display: flex; gap: 5px; text-align: left; }
.weather-icon { position: relative; padding: 4px 4px 0 0; }
.weather-text, .clock { display: flex; flex-direction: column; }
.muted { color: #666; }
.badge { position: absolute; top: -1px; right: 0; width: 16px; height: 16px; border-radius: 8px; background: #c42b1c; color: #fff; line-height: 16px; text-align: center; }
.app .badge { top: 3px; right: 2px; }
.apps { display: flex; align-items: center; gap: 6px; }
.app { position: relative; display: grid; place-items: center; width: 38px; height: 38px; border-radius: 4px; }
.app.active { background: #f9f9f9; box-shadow: 0 0 0 1px #e3e3e3; }
.app.run::after, .app.active::after { content: ""; position: absolute; bottom: 0; left: 16px; width: 6px; height: 3px; border-radius: 2px; background: #888; }
.app.active::after { left: 11px; width: 16px; background: #0078d4; }
.task-search { display: flex; align-items: center; gap: 9px; width: 219px; height: 31px; padding: 0 11px; background: #fafafa; border: 1px solid #dcdcdc; border-radius: 16px; font-size: 13px; }
.task-search input { flex: 1; min-width: 0; }
.tray { display: flex; align-items: center; justify-self: end; }
.quick { display: flex; align-items: center; gap: 8px; margin: 0 20px 0 8px; }
.battery { width: 20px; height: 16px; }
.clock { text-align: right; }
```
